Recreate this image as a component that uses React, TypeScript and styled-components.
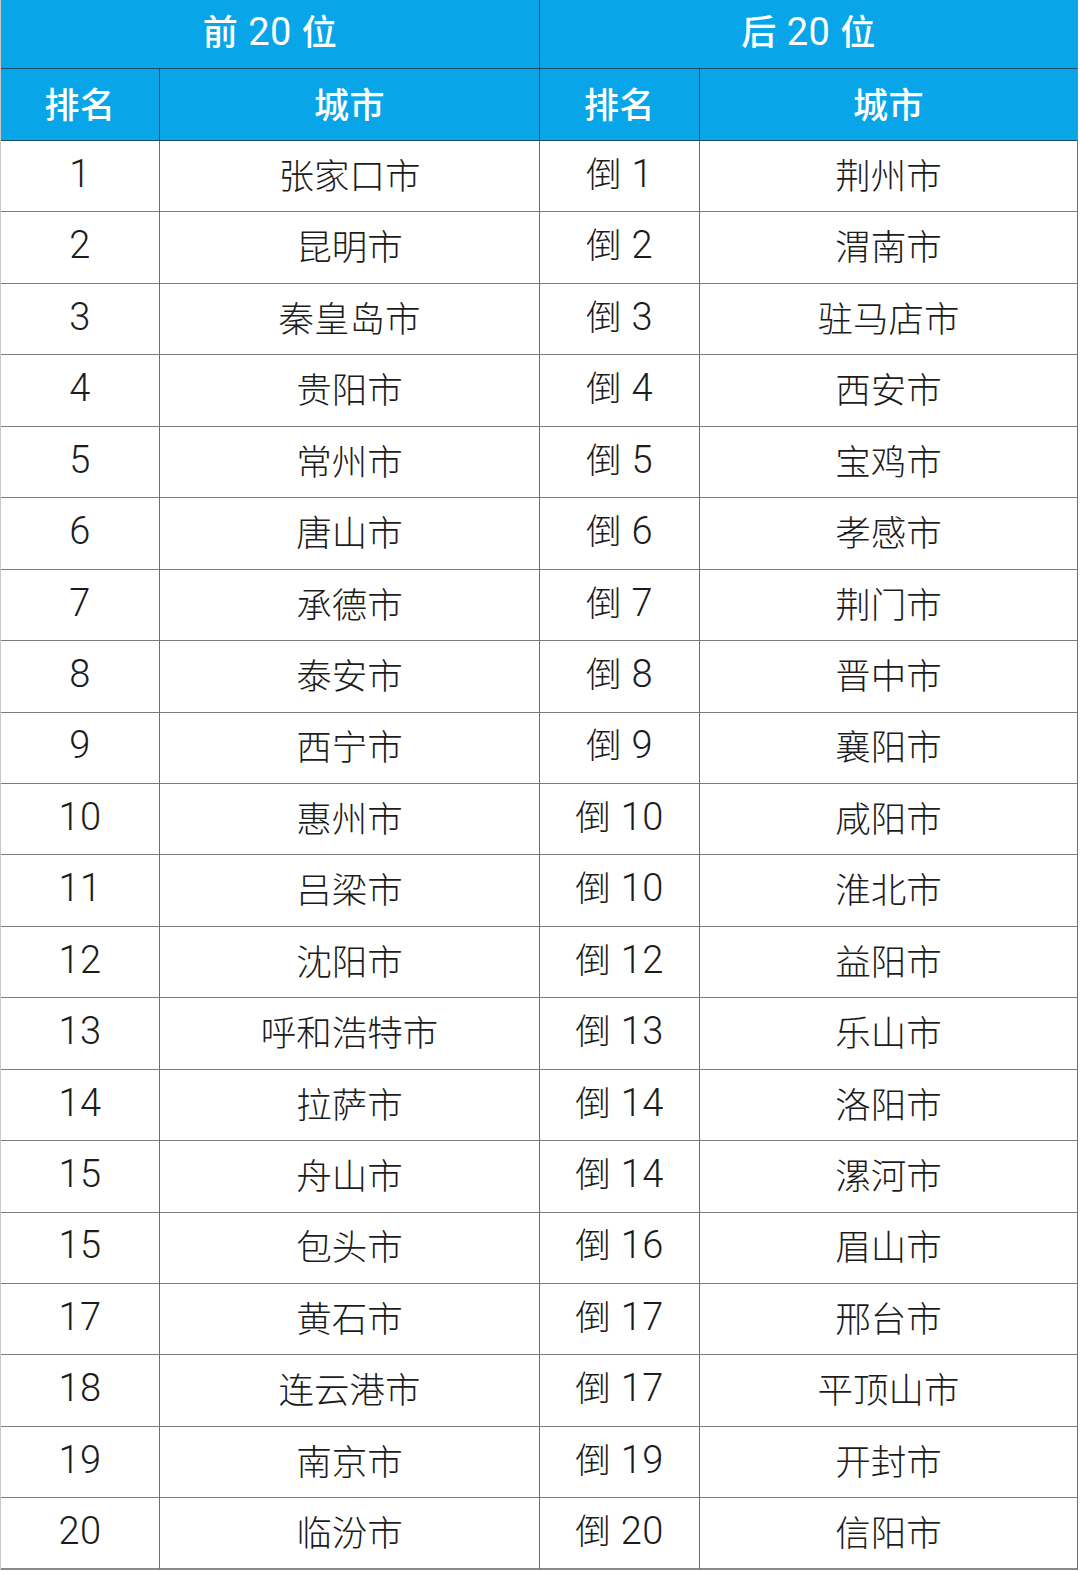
import React from "react";
import styled, { createGlobalStyle } from "styled-components";

const Global = createGlobalStyle`
  html, body { margin: 0; padding: 0; background: #ffffff; }
  body { font-family: "Noto Sans CJK SC", "Noto Sans", sans-serif; }
`;

const Grid = styled.div`
  display: grid;
  grid-template-columns: 159px 380px 160px 378px;
  grid-template-rows: 69px 72px;
  grid-auto-rows: 71.45px;
  width: 1077px;
  box-sizing: border-box;
  border-left: 1px solid #c8c8c8;
`;

const HeadCell = styled.div<{ $span?: number; $last?: boolean }>`
  grid-column: span ${(p) => p.$span ?? 1};
  background: #08a6e8;
  color: #ffffff;
  display: flex;
  align-items: center;
  justify-content: center;
  font-size: 35px;
  font-weight: 500;
  letter-spacing: 0.5px;
  box-sizing: border-box;
  border-right: 1px solid ${(p) => (p.$last ? "#7a8a96" : "#1a4f6c")};
  border-bottom: 1.5px solid #1a4f6c;
  padding-bottom: 4px;
`;

const Cell = styled.div<{ $last?: boolean; $bottom?: boolean }>`
  display: flex;
  align-items: center;
  justify-content: center;
  font-size: 35.5px;
  font-weight: 300;
  color: #1c1c1c;
  box-sizing: border-box;
  border-right: 1px solid #6e6e6e;
  border-bottom: ${(p) => (p.$bottom ? "2.5px solid #8a8a8a" : "1.5px solid #7c7c7c")};
  padding-bottom: 4px;
`;

const Text = styled.span`
  display: inline-block;
  line-height: 1.2;
  white-space: nowrap;
`;

const Num = styled.span<{ $head?: boolean }>`
  font-family: Roboto, "Liberation Sans", sans-serif;
  font-weight: ${(p) => (p.$head ? 400 : 300)};
  font-size: 38px;
  letter-spacing: 0.5px;
`;

const Gap = styled.span`
  display: inline-block;
  width: 10px;
`;

const top = [
  "张家口市", "昆明市", "秦皇岛市", "贵阳市", "常州市", "唐山市", "承德市", "泰安市", "西宁市", "惠州市",
  "吕梁市", "沈阳市", "呼和浩特市", "拉萨市", "舟山市", "包头市", "黄石市", "连云港市", "南京市", "临汾市",
];
const topRank = ["1","2","3","4","5","6","7","8","9","10","11","12","13","14","15","15","17","18","19","20"];
const bottom = [
  "荆州市", "渭南市", "驻马店市", "西安市", "宝鸡市", "孝感市", "荆门市", "晋中市", "襄阳市", "咸阳市",
  "淮北市", "益阳市", "乐山市", "洛阳市", "漯河市", "眉山市", "邢台市", "平顶山市", "开封市", "信阳市",
];
const bottomRank = ["1","2","3","4","5","6","7","8","9","10","10","12","13","14","14","16","17","17","19","20"];

export default function App() {
  return (
    <>
      <Global />
      <Grid>
        <HeadCell $span={2}><Text>前<Gap /><Num $head>20</Num><Gap />位</Text></HeadCell>
        <HeadCell $span={2} $last><Text>后<Gap /><Num $head>20</Num><Gap />位</Text></HeadCell>
        <HeadCell><Text>排名</Text></HeadCell>
        <HeadCell><Text>城市</Text></HeadCell>
        <HeadCell><Text>排名</Text></HeadCell>
        <HeadCell $last><Text>城市</Text></HeadCell>
        {top.map((city, i) => {
          const b = i === top.length - 1;
          return (
            <React.Fragment key={i}>
              <Cell $bottom={b}><Text><Num>{topRank[i]}</Num></Text></Cell>
              <Cell $bottom={b}><Text>{city}</Text></Cell>
              <Cell $bottom={b}><Text>倒<Gap /><Num>{bottomRank[i]}</Num></Text></Cell>
              <Cell $bottom={b} $last><Text>{bottom[i]}</Text></Cell>
            </React.Fragment>
          );
        })}
      </Grid>
    </>
  );
}
